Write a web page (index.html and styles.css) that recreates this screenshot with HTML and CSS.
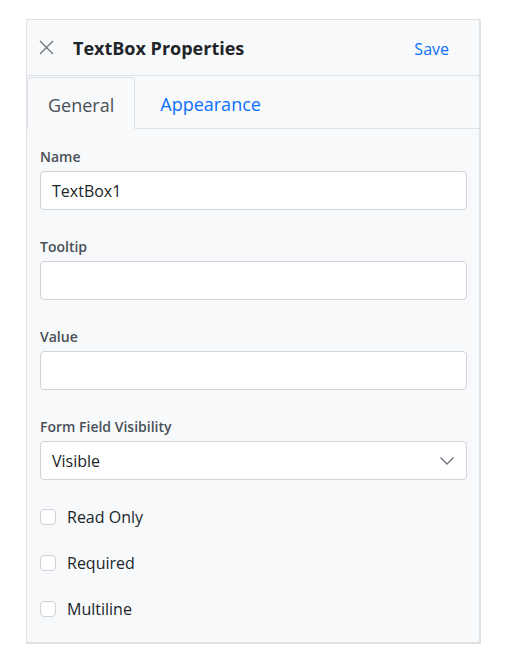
FILE: index.html
```html
<!DOCTYPE html>
<html>
<head>
<meta charset="utf-8">
<link rel="stylesheet" href="styles.css">
</head>
<body>
<div class="panel">
  <div class="header">
    <button class="close" aria-label="Close">
      <svg width="15" height="15" viewBox="0 0 15 15"><path d="M1 1L14 14M14 1L1 14" stroke="#6c757d" stroke-width="1.3" fill="none"/></svg>
    </button>
    <div class="title">TextBox Properties</div>
    <button class="save">Save</button>
  </div>
  <div class="tabs">
    <div class="tab active">General</div>
    <div class="tab second">Appearance</div>
    <div class="tab-fill"></div>
  </div>
  <div class="content">
    <div class="field">
      <label class="label">Name</label>
      <div class="input">TextBox1</div>
    </div>
    <div class="field">
      <label class="label">Tooltip</label>
      <div class="input"></div>
    </div>
    <div class="field">
      <label class="label">Value</label>
      <div class="input"></div>
    </div>
    <div class="field">
      <label class="label">Form Field Visibility</label>
      <div class="input select">
        <span>Visible</span>
        <svg width="14" height="8" viewBox="0 0 14 8"><path d="M0.5 0.5L7 7L13.5 0.5" stroke="#6c757d" stroke-width="1.3" fill="none"/></svg>
      </div>
    </div>
    <div class="checks">
      <div class="check"><span class="box"></span><span>Read Only</span></div>
      <div class="check"><span class="box"></span><span>Required</span></div>
      <div class="check"><span class="box"></span><span>Multiline</span></div>
    </div>
  </div>
</div>
</body>
</html>
```
FILE: styles.css
```css
* { box-sizing: border-box; }
body {
  margin: 0;
  background: #ffffff;
  font-family: "Open Sans", "Noto Sans", sans-serif;
  color: #212529;
}
.panel {
  margin: 19px 0 0 26px;
  width: 455px;
  height: 625px;
  background: #f8f9fa;
  border-style: solid;
  border-color: #dee2e6;
  border-width: 1px 2px 2px 1px;
  display: flex;
  flex-direction: column;
}
.header {
  height: 56px;
  display: flex;
  align-items: center;
  padding: 0 14px 0 12px;
  border-bottom: 1px solid #dee2e6;
}
.close {
  border: 0;
  background: none;
  padding: 0;
  width: 15px;
  height: 15px;
  display: flex;
  margin-right: 19px;
}
.title {
  flex: 1;
  font-size: 18px;
  font-weight: 700;
  color: #212529;
}
.save {
  border: 0;
  background: none;
  font-family: inherit;
  font-size: 16px;
  color: #0d6efd;
  padding: 2px 16px 0;
}
.tabs {
  display: flex;
  height: 53px;
  padding-top: 1px;
}
.tab {
  padding: 3px 20px 0;
  display: flex;
  align-items: center;
  font-size: 18px;
  color: #0d6efd;
  border-bottom: 1px solid #dee2e6;
}
.tab.second {
  padding-left: 25px;
}
.tab.active {
  color: #495057;
  border: 1px solid #dee2e6;
  border-bottom-color: transparent;
  border-radius: 4px 4px 0 0;
  background: #f8f9fa;
}
.tab-fill {
  flex: 1;
  border-bottom: 1px solid #dee2e6;
}
.content {
  padding: 17px 12px 0 13px;
}
.field {
  margin-bottom: 26px;
}
.label {
  display: block;
  font-size: 14px;
  line-height: 21px;
  font-weight: 600;
  color: #495057;
  margin-bottom: 4px;
}
.input {
  height: 39px;
  background: #ffffff;
  border: 1px solid #ced4da;
  border-radius: 4px;
  padding: 0 12px 0 11px;
  display: flex;
  align-items: center;
  font-size: 16px;
  color: #212529;
}
.select {
  justify-content: space-between;
}
.checks {
  display: flex;
  flex-direction: column;
  gap: 22px;
  margin-top: -1px;
}
.check {
  height: 24px;
  display: flex;
  align-items: center;
  gap: 11px;
  font-size: 16px;
  color: #212529;
}
.box {
  width: 16px;
  height: 16px;
  background: #ffffff;
  border: 1px solid #ced4da;
  border-radius: 4px;
}
```
